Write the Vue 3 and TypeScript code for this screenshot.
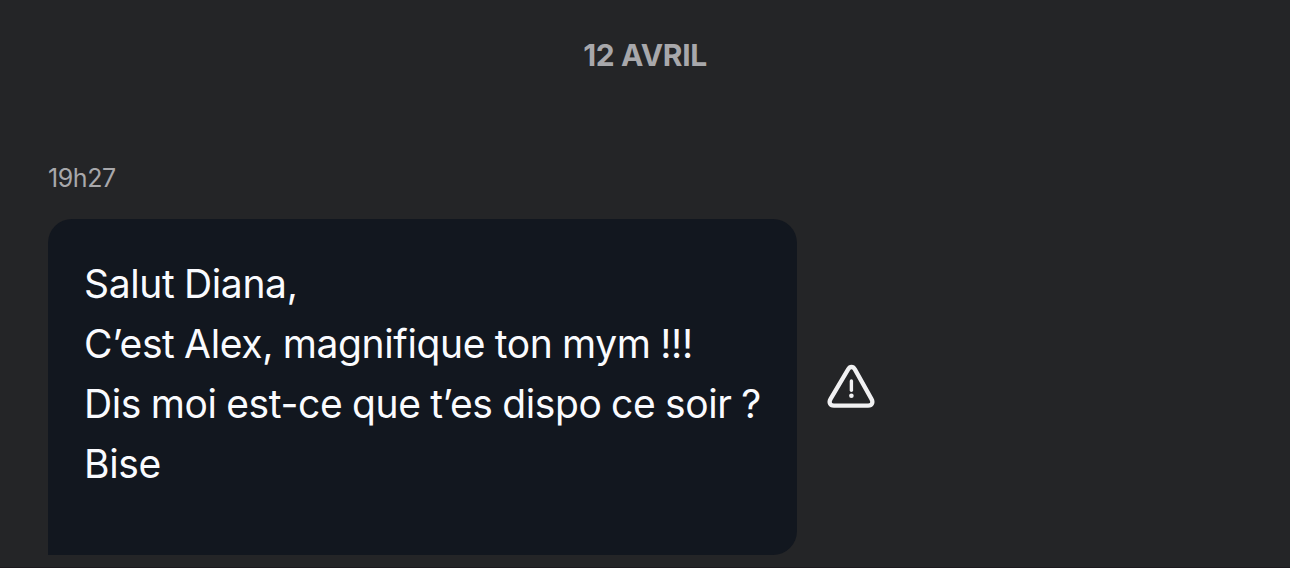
<script setup lang="ts">
interface MessageLine {
  id: string
  text: string
}

const date = '12 AVRIL'
const time = '19h27'
const lines: MessageLine[] = [
  { id: 'greeting', text: 'Salut Diana,' },
  { id: 'intro', text: 'C’est Alex, magnifique ton mym !!!' },
  { id: 'question', text: 'Dis moi est-ce que t’es dispo ce soir ?' },
  { id: 'closing', text: 'Bise' },
]
</script>

<template>
  <main class="chat">
    <h2 class="date">{{ date }}</h2>
    <div class="time"><time>{{ time }}</time></div>
    <div class="message">
      <div class="bubble">
        <p v-for="line in lines" :key="line.id" class="line">{{ line.text }}</p>
      </div>
      <svg class="warning" viewBox="0 0 50 46" fill="none" aria-label="Signaler">
        <path
          d="M22.1 5.4 L4.6 34.9 C2.5 38.5 4 41.6 7.9 41.6 H42.1 C46 41.6 47.5 38.5 45.4 34.9 L28.9 5.4 C27 2.2 24 2.2 22.1 5.4 Z"
          stroke="#f1f1f2"
          stroke-width="4.3"
          stroke-linejoin="round"
        />
        <path d="M25.4 17 V26.2" stroke="#f1f1f2" stroke-width="3.4" stroke-linecap="round" />
        <circle cx="25.4" cy="31.7" r="2.3" fill="#f1f1f2" />
      </svg>
    </div>
  </main>
</template>

<style>
body {
  background: #242527;
}
</style>

<style scoped>
.chat {
  box-sizing: border-box;
  height: 568px;
  overflow: hidden;
  padding: 35px 48px 0;
  background: #242527;
  border-bottom: 1px solid #1c1a1e;
  font-family: Inter, "Liberation Sans", sans-serif;
}
.date {
  margin: 0;
  height: 40px;
  line-height: 40px;
  text-align: center;
  font-size: 30px;
  font-weight: 700;
  letter-spacing: -0.35px;
  color: #a8a8ab;
}
.time {
  margin-top: 87px;
  height: 32px;
  line-height: 32px;
  font-size: 25px;
  letter-spacing: -0.4px;
  color: #a8a8ab;
}
.message {
  display: flex;
  align-items: center;
  gap: 29px;
  margin-top: 25px;
}
.bubble {
  box-sizing: border-box;
  width: 749px;
  height: 336px;
  padding: 35px 36px;
  border-radius: 24px 24px 24px 0;
  background: #12171f;
}
.line {
  margin: 0;
  height: 60px;
  line-height: 60px;
  font-size: 39px;
  font-weight: 430;
  letter-spacing: -0.36px;
  word-spacing: -1px;
  color: #fafbfe;
  white-space: nowrap;
}
.warning {
  width: 50px;
  height: 46px;
}
</style>
